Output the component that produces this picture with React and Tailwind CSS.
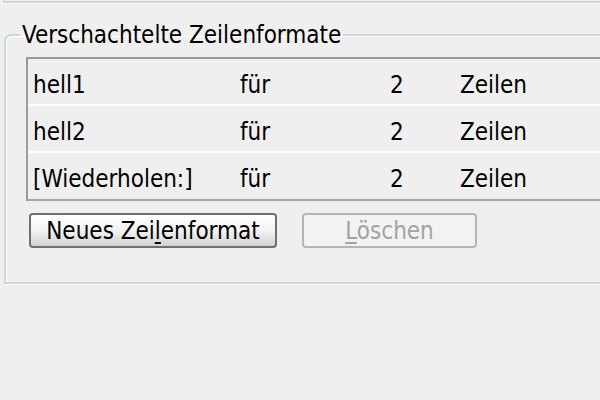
import React from "react";

const rows = [
  ["hell1", "für", "2", "Zeilen"],
  ["hell2", "für", "2", "Zeilen"],
  ["[Wiederholen:]", "für", "2", "Zeilen"],
];

export default function App() {
  return (
    <div className="w-[600px] h-[400px] overflow-hidden bg-[#efefef] text-black font-['DejaVu_Sans_Condensed','DejaVu_Sans',sans-serif] text-[24px] leading-none">
      <div className="ml-[3px] h-[3px] border-l-2 border-b-2 border-[#c9d7d7] shadow-[0_1px_0_#fff]" />
      <fieldset className="ml-[4px] mt-[18px] w-[640px] h-[263px] border-2 border-[#c9d7d7] rounded-tl-[7px] shadow-[inset_1px_1px_0_#fff,1px_1px_0_#fff] pl-[20px] pr-0 pb-0">
        <legend className="ml-[-6px] px-[2px] leading-[28px]">Verschachtelte Zeilenformate</legend>
        <div className="mt-[8px] border-t-2 border-l-2 border-b-2 border-t-[#999] border-l-[#9a9a9a] border-b-[#a8a8a8]">
          {rows.map((r, i) => (
            <div
              key={i}
              className={`grid grid-cols-[207px_150px_70px_1fr] items-center pt-[6px] pl-[5px] ${i < 2 ? "h-[47px] border-b-2 border-white" : "h-[46px]"}`}
            >
              <span>{r[0]}</span>
              <span>{r[1]}</span>
              <span>{r[2]}</span>
              <span>{r[3]}</span>
            </div>
          ))}
        </div>
        <div className="flex gap-[25px] mt-[12px] ml-[3px]">
          <button className="w-[248px] h-[35px] border-2 border-[#6f6f6f] rounded-[4px] bg-gradient-to-b from-[#ffffff] via-[#f2f2f2] to-[#d2d2d2] flex items-center justify-center">
            <span>
              Neues Zei<span className="underline underline-offset-[3px]">l</span>enformat
            </span>
          </button>
          <button disabled className="w-[175px] h-[35px] border-2 border-[#b4b4b4] rounded-[4px] bg-[#f2f2f2] text-[#a3a3a3] flex items-center justify-center">
            <span>
              <span className="underline underline-offset-[3px]">L</span>öschen
            </span>
          </button>
        </div>
      </fieldset>
    </div>
  );
}
